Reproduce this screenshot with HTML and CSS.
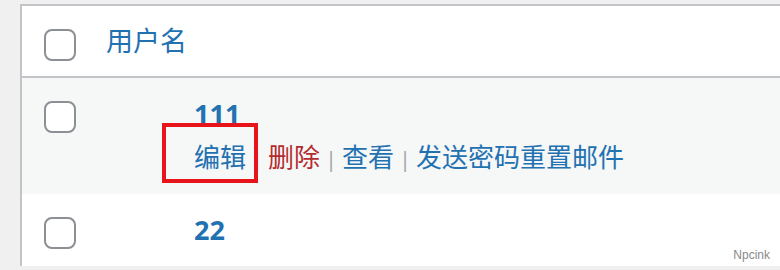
FILE: index.html
```html
<!DOCTYPE html>
<html lang="zh-CN">

<head>
  <meta charset="UTF-8">
  <meta name="viewport" content="width=device-width, initial-scale=1.0">
  <title>用户</title>
  <link rel="stylesheet" href="styles.css">
</head>

<body>
  <table class="users">
    <thead>
      <tr>
        <td class="check-column"><span class="checkbox"></span></td>
        <th class="column-username"><a href="#">用户名</a></th>
      </tr>
    </thead>
    <tbody>
      <tr class="alternate">
        <td class="check-column"><span class="checkbox"></span></td>
        <td class="column-username">
          <strong><a href="#">111</a></strong>
          <div class="row-actions">
            <a href="#">编辑</a><span class="sep">|</span><a href="#" class="delete">删除</a><span class="sep">|</span><a href="#">查看</a><span class="sep">|</span><a href="#">发送密码重置邮件</a>
            <div class="highlight"></div>
          </div>
        </td>
      </tr>
      <tr>
        <td class="check-column"><span class="checkbox"></span></td>
        <td class="column-username">
          <strong><a href="#">22</a></strong>
        </td>
      </tr>
    </tbody>
  </table>

  <div class="watermark">Npcink</div>
</body>

</html>
```

FILE: styles.css
```css
body {
  margin: 0;
  padding: 4px 0 0 20px;
  background: #f0f0f1;
  font-family: "Noto Sans", "Noto Sans CJK SC", sans-serif;
  color: #50575e;
  overflow: hidden;
}

a {
  color: #2271b1;
  text-decoration: none;
}

.users {
  width: 100%;
  border-collapse: collapse;
  border-top: 2px solid #c3c4c7;
  border-left: 2px solid #c3c4c7;
  background: #fff;
}

.users thead tr {
  border-bottom: 2px solid #c3c4c7;
}

.users td,
.users th {
  padding: 0;
  vertical-align: top;
  text-align: left;
}

.check-column {
  width: 64px;
  padding-top: 23px !important;
}

.check-column .checkbox {
  display: block;
  box-sizing: border-box;
  width: 32px;
  height: 32px;
  margin-left: 22px;
  border: 2px solid #8c8f94;
  border-radius: 8px;
  background: #fff;
}

.users th.column-username {
  padding: 16px 20px;
  font-size: 27px;
  font-weight: 400;
  line-height: 38px;
}

.users td.column-username {
  padding: 16px 20px 16px 108px;
  font-size: 26px;
  line-height: 39px;
}

.column-username strong {
  font-size: 27px;
  font-weight: 700;
}

.alternate {
  background: #f6f7f7;
}

.row-actions {
  position: relative;
  padding-top: 4px;
  font-size: 26px;
  line-height: 39px;
}

.row-actions .delete {
  color: #b32d2e;
}

.row-actions .sep {
  display: inline-block;
  width: 22px;
  text-align: center;
  color: #a7aaad;
  font-size: 22px;
}

.highlight {
  position: absolute;
  left: -32px;
  top: -11px;
  width: 96px;
  height: 60px;
  box-sizing: border-box;
  border: 4px solid #e8141c;
}

.watermark {
  position: absolute;
  right: 10px;
  bottom: 8px;
  font-family: "Liberation Sans", sans-serif;
  font-size: 12px;
  color: #8a8a8a;
}
```
